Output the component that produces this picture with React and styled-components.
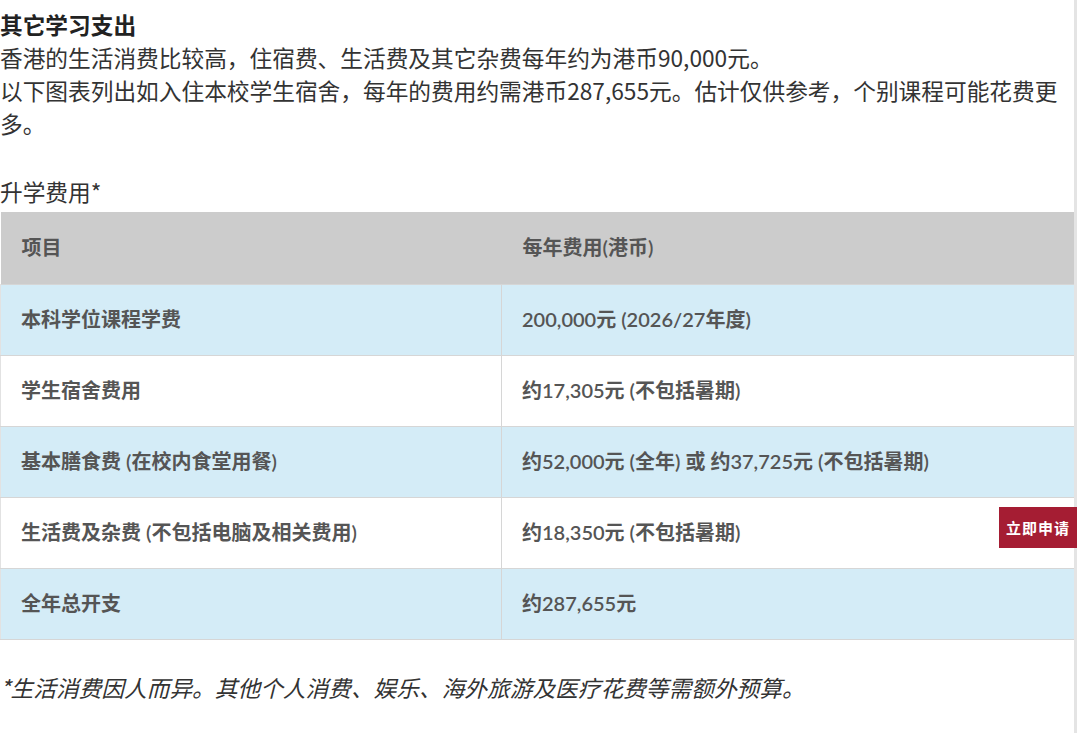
import React from 'react'
import styled, { createGlobalStyle } from "styled-components"

const GlobalStyle = createGlobalStyle`
  html, body {
    margin: 0;
    padding: 0;
    background: #ffffff;
  }
  body {
    font-family: "Noto Sans CJK SC", "Noto Sans", sans-serif;
  }
`

const rows = [
  { item: "本科学位课程学费", cost: "200,000元 (2026/27年度)", blue: true },
  { item: "学生宿舍费用", cost: "约17,305元 (不包括暑期)" },
  { item: "基本膳食费 (在校内食堂用餐)", cost: "约52,000元 (全年) 或 约37,725元 (不包括暑期)", blue: true },
  { item: "生活费及杂费 (不包括电脑及相关费用)", cost: "约18,350元 (不包括暑期)" },
  { item: "全年总开支", cost: "约287,655元", blue: true },
]

const App = () => {
  return (
    <Page>
      <GlobalStyle />
      <Title>其它学习支出</Title>
      <Para>香港的生活消费比较高，住宿费、生活费及其它杂费每年约为港币90,000元。</Para>
      <Para>以下图表列出如入住本校学生宿舍，每年的费用约需港币287,655元。估计仅供参考，个别课程可能花费更多。</Para>
      <Spacer />
      <Para>升学费用*</Para>
      <Table>
        <colgroup>
          <col style={{ width: "501px" }} />
          <col />
        </colgroup>
        <thead>
          <tr>
            <HeadCell>项目</HeadCell>
            <HeadCell>每年费用(港币)</HeadCell>
          </tr>
        </thead>
        <tbody>
          {rows.map((r) => (
            <Row key={r.item} $blue={r.blue}>
              <Cell $first>{r.item}</Cell>
              <Cell>{r.cost}</Cell>
            </Row>
          ))}
        </tbody>
      </Table>
      <Note>*生活消费因人而异。其他个人消费、娱乐、海外旅游及医疗花费等需额外预算。</Note>
      <ApplyButton>立即申请</ApplyButton>
    </Page>
  )
}

export default App

const Page = styled.div`
  position: relative;
  width: 1077px;
  min-height: 733px;
  border-right: 3px solid #e4e4e4;
  color: #333333;
  font-size: 22.7px;
  line-height: 33px;
  padding-top: 8px;
  box-sizing: border-box;
`
const Title = styled.div`
  font-weight: 700;
  color: #222222;
  line-height: 33px;
`
const Para = styled.div`
  line-height: 33px;
  color: #333333;
`
const Spacer = styled.div`
  height: 35px;
`
const Table = styled.table`
  width: 100%;
  table-layout: fixed;
  border-collapse: collapse;
  margin-top: 4px;
  font-family: Lato, "Noto Sans CJK SC", sans-serif;
  font-size: 20px;
  font-weight: 600;
  color: #555555;
`
const HeadCell = styled.th`
  background: #cccccc;
  text-align: left;
  font-weight: 600;
  height: 72px;
  padding: 0 0 0 21px;
  box-sizing: border-box;
`
const Row = styled.tr`
  background: ${(p) => (p.$blue ? "#d4ecf7" : "#ffffff")};
  border-top: 1px solid #d6d6d6;
`
const Cell = styled.td`
  height: 71px;
  padding: 0 0 0 20px;
  box-sizing: border-box;
  border-right: ${(p) => (p.$first ? "1px solid #d6d6d6" : "none")};
  border-left: ${(p) => (p.$first ? "1px solid #e2e2e2" : "none")};
  border-bottom: 1px solid #d6d6d6;
`
const Note = styled.div`
  margin-top: 31px;
  font-style: italic;
  color: #333333;
  line-height: 33px;
`
const ApplyButton = styled.div`
  position: absolute;
  top: 507px;
  right: -3px;
  width: 78px;
  height: 41px;
  background: #a51d33;
  color: #ffffff;
  font-size: 15px;
  font-weight: 700;
  display: flex;
  align-items: center;
  justify-content: center;
  letter-spacing: 1px;
`
